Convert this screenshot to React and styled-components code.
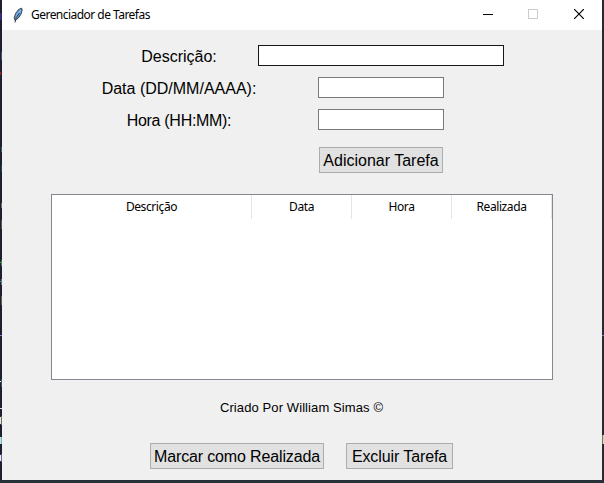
import React from "react";
import styled, { createGlobalStyle } from "styled-components";

const GlobalStyle = createGlobalStyle`
  html, body { margin: 0; padding: 0; overflow: hidden; }
  * { box-sizing: border-box; }
`;

const speck = (x, y, w, h, color) =>
  `linear-gradient(${color}, ${color}) ${x}px ${y}px / ${w}px ${h}px no-repeat`;

const specks = [
  speck(0, 13, 2, 7, "#3b2a78"),
  speck(1, 52, 1, 8, "#3f5270"),
  speck(0, 72, 1, 3, "#b01830"),
  speck(1, 147, 1, 5, "#37604f"),
  speck(1, 165, 1, 7, "#24453f"),
  speck(1, 203, 1, 5, "#6b6b62"),
  speck(1, 220, 1, 9, "#55584c"),
  speck(1, 260, 1, 6, "#4f7a62"),
  speck(0, 262, 1, 1, "#22a05a"),
  speck(1, 279, 1, 6, "#5c7a70"),
  speck(0, 281, 1, 1, "#4a7fc0"),
  speck(1, 296, 1, 9, "#5b6048"),
  speck(0, 335, 2, 1, "#9a70d0"),
  speck(0, 381, 1, 1, "#ffffff"),
  speck(1, 379, 1, 8, "#3d5358"),
  speck(0, 408, 2, 1, "#d8d8d8"),
  speck(0, 417, 1, 7, "#f4e4c0"),
  speck(1, 416, 1, 9, "#55717a"),
  speck(0, 437, 1, 7, "#b5e6ea"),
  speck(1, 437, 1, 7, "#7fb0b4"),
  speck(0, 455, 1, 6, "#fff0b0"),
  speck(1, 454, 1, 8, "#5a5ad0"),
  speck(602, 335, 2, 1, "#8270b8"),
  speck(602, 435, 1, 9, "#607a80"),
  speck(603, 435, 1, 9, "#f0d090"),
  "linear-gradient(#263238, #263238) 0 480px / 604px 3px no-repeat",
  "linear-gradient(#292a30, #292a30) 602px 0 / 2px 480px no-repeat",
].join(", ");

const Desktop = styled.div`
  width: 604px;
  height: 483px;
  padding: 0 2px 3px;
  background: ${specks}, #1e2030;
`;

const Window = styled.main`
  display: flex;
  flex-direction: column;
  height: 480px;
  background: #f0f0f0;
  color: #000;
  font-family: "Liberation Sans", Arial, sans-serif;
`;

const TitleBar = styled.header`
  display: flex;
  align-items: center;
  height: 30px;
  flex: none;
  padding-left: 10px;
  background: #fff;
`;

const Title = styled.h1`
  flex: 1;
  margin: 0 0 0 7px;
  font: 400 12px/16px "Noto Sans", sans-serif;
  letter-spacing: -0.53px;
  white-space: nowrap;
`;

const WindowButton = styled.button`
  display: flex;
  align-items: center;
  justify-content: center;
  width: 46px;
  height: 30px;
  padding: 0 0 2px;
  border: 0;
  background: none;
`;

const Form = styled.form`
  display: grid;
  grid-template-columns: 154px 248px;
  grid-template-rows: 21px 21px 21px 26px;
  row-gap: 11px;
  justify-items: center;
  align-items: center;
  margin: 15px 0 0 100px;
`;

const Label = styled.label`
  font-size: 16px;
  line-height: 20px;
  letter-spacing: ${(p) => p.$tracking || 0}px;
  white-space: nowrap;
  padding-top: 2px;
`;

const Entry = styled.input`
  width: ${(p) => p.$width}px;
  height: 21px;
  padding: 0 3px;
  margin-left: 2px;
  border: 1px solid ${(p) => (p.$active ? "#171717" : "#7a7a7a")};
  border-radius: 0;
  outline: 0;
  background: #fff;
  font: inherit;
`;

const Button = styled.button`
  width: ${(p) => p.$width}px;
  height: 26px;
  padding: 2px 0 0;
  border: 1px solid #adadad;
  border-radius: 0;
  background: #e1e1e1;
  color: #000;
  font: 16px/22px "Liberation Sans", Arial, sans-serif;
  letter-spacing: ${(p) => p.$tracking || 0}px;
  white-space: nowrap;
`;

const SubmitButton = styled(Button)`
  grid-column: 2;
  margin: 12px 0 0 2px;
`;

const TaskTable = styled.section`
  width: 502px;
  height: 186px;
  margin: 27px 0 0 49px;
  border: 1px solid #828790;
  background: #fff;
`;

const TableHeader = styled.div`
  display: grid;
  grid-template-columns: 200px 100px 100px 100px;
  height: 24px;
`;

const ColumnTitle = styled.div`
  border-right: 1px solid #e5e5e5;
  text-align: center;
  font: 12px/24px "Noto Sans", sans-serif;
  letter-spacing: -0.4px;
`;

const Credit = styled.p`
  width: 599px;
  margin: 19px 0 0;
  text-align: center;
  font-size: 13px;
  line-height: 18px;
  letter-spacing: 0.1px;
`;

const Actions = styled.footer`
  display: flex;
  gap: 22px;
  margin: 26px 0 0 148px;
`;

function FeatherIcon() {
  return (
    <svg width="12" height="17" viewBox="0 0 12 17">
      <path d="M9.7 1.2 6.6 2.4 3.6 6.4 2.2 10.8 3 13.5 6.4 11 9 7.2 10.2 3Z" fill="#5b9be0" stroke="#222" strokeWidth=".8" />
      <path d="M8.8 3 5 8.3 3.3 13" fill="none" stroke="#a9cdf0" strokeWidth="1" />
      <path d="M7.4 6 4.2 10.6 3 15.5" fill="none" stroke="#111" strokeWidth=".8" />
    </svg>
  );
}

export default function App() {
  return (
    <>
      <GlobalStyle />
      <Desktop>
        <Window>
          <TitleBar>
            <FeatherIcon />
            <Title>Gerenciador de Tarefas</Title>
            <WindowButton aria-label="Minimizar">
              <svg width="12" height="10" shapeRendering="crispEdges"><path d="M2 5.5H12" stroke="#000" /></svg>
            </WindowButton>
            <WindowButton aria-label="Maximizar" disabled>
              <svg width="10" height="10" shapeRendering="crispEdges"><path d="M.5.5h9v9h-9z" fill="none" stroke="#ccc" /></svg>
            </WindowButton>
            <WindowButton aria-label="Fechar">
              <svg width="10" height="10"><path d="M0 0 10 10M10 0 0 10" stroke="#000" strokeWidth="1.2" /></svg>
            </WindowButton>
          </TitleBar>
          <Form>
            <Label htmlFor="descricao">Descrição:</Label>
            <Entry id="descricao" $width={246} $active />
            <Label htmlFor="data">Data (DD/MM/AAAA):</Label>
            <Entry id="data" $width={126} />
            <Label htmlFor="hora" $tracking={-0.3}>Hora (HH:MM):</Label>
            <Entry id="hora" $width={126} />
            <SubmitButton type="button" $width={124}>Adicionar Tarefa</SubmitButton>
          </Form>
          <TaskTable>
            <TableHeader>
              <ColumnTitle>Descrição</ColumnTitle>
              <ColumnTitle>Data</ColumnTitle>
              <ColumnTitle>Hora</ColumnTitle>
              <ColumnTitle>Realizada</ColumnTitle>
            </TableHeader>
          </TaskTable>
          <Credit>Criado Por William Simas ©</Credit>
          <Actions>
            <Button $width={174} $tracking={-0.15}>Marcar como Realizada</Button>
            <Button $width={107} $tracking={-0.1}>Excluir Tarefa</Button>
          </Actions>
        </Window>
      </Desktop>
    </>
  );
}
